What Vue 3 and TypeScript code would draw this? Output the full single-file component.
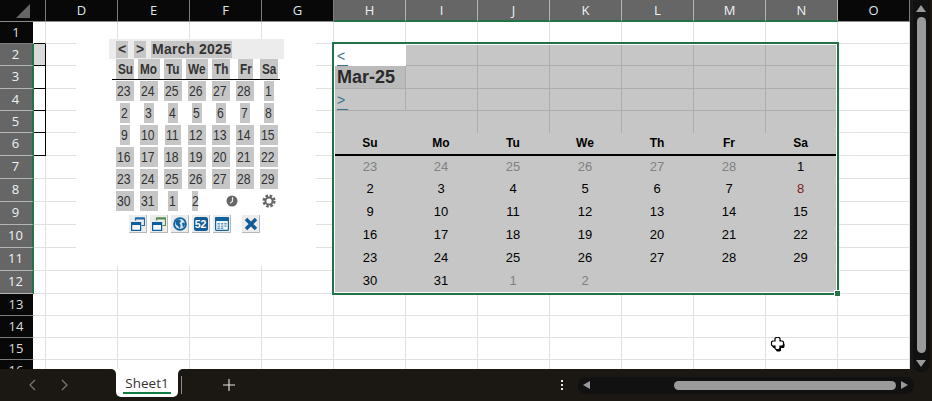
<script setup lang="ts">
const columns = ['', 'D', 'E', 'F', 'G', 'H', 'I', 'J', 'K', 'L', 'M', 'N', 'O']
const rows = Array.from({ length: 16 }, (_, i) => i + 1)
const selectedCol = (c: string) => 'HIJKLMN'.includes(c) && c !== ''
const selectedRow = (r: number) => r >= 2 && r <= 12
const weekdays = ['Su', 'Mo', 'Tu', 'We', 'Th', 'Fr', 'Sa']
const miniDates = [23, 24, 25, 26, 27, 28, 1, 2, 3, 4, 5, 6, 7, 8, 9, 10, 11, 12, 13, 14, 15, 16, 17, 18, 19, 20, 21, 22, 23, 24, 25, 26, 27, 28, 29, 30, 31, 1]
interface Day { n: number; muted?: boolean; red?: boolean }
const bigDates: Day[] = [
  { n: 23, muted: true }, { n: 24, muted: true }, { n: 25, muted: true }, { n: 26, muted: true }, { n: 27, muted: true }, { n: 28, muted: true }, { n: 1 },
  { n: 2 }, { n: 3 }, { n: 4 }, { n: 5 }, { n: 6 }, { n: 7 }, { n: 8, red: true },
  ...[9, 10, 11, 12, 13, 14, 15, 16, 17, 18, 19, 20, 21, 22, 23, 24, 25, 26, 27, 28, 29, 30, 31].map((n) => ({ n })),
  { n: 1, muted: true }, { n: 2, muted: true }
]
const topCells = Array.from({ length: 28 }, (_, i) => i)
</script>

<template>
  <div class="app">
    <div class="main">
      <div class="sheet-wrap">
        <div class="sheet">
          <div class="corner"><span class="tri"></span></div>
          <div v-for="c in columns" :key="'h' + c" class="col-head" :class="{ sel: selectedCol(c) }">{{ c }}</div>
          <template v-for="r in rows" :key="r">
            <div class="row-head" :class="{ sel: selectedRow(r) }">{{ r }}</div>
            <div
              v-for="(c, ci) in columns"
              :key="r + c"
              class="cell"
              :class="{ boxed: ci === 0 && r >= 1 && r <= 6, boxedrow: ci === 0 && r === 1, shade: ci === 0 && r === 2 }"
            ></div>
          </template>
        </div>

        <!-- floating calendar picture -->
        <div class="picture">
          <div class="band">
            <span class="nav">&lt;</span>
            <span class="nav">&gt;</span>
            <span class="title">March 2025</span>
          </div>
          <div class="mini-grid heads">
            <div v-for="w in weekdays" :key="w" class="mini-cell"><b class="chip head-chip"><span class="sq sq-head">{{ w }}</span></b></div>
          </div>
          <div class="mini-rule"></div>
          <div class="mini-grid dates">
            <div v-for="(d, i) in miniDates" :key="i" class="mini-cell"><span class="chip"><span class="sq">{{ d }}</span></span></div>
            <div class="mini-cell"><span class="chip narrow"><span class="sq">2</span></span></div>
            <div class="mini-cell clock-cell">
              <svg width="12" height="12" viewBox="0 0 12 12">
                <circle cx="6" cy="6" r="5.5" fill="#666" />
                <path d="M6.6 2.2 L6.4 6.4 L4 8.4" stroke="#eee" stroke-width="1.2" fill="none" />
              </svg>
            </div>
            <div class="mini-cell gear-cell">
              <svg width="14" height="14" viewBox="0 0 14 14">
                <circle cx="7" cy="7" r="5.4" fill="none" stroke="#666" stroke-width="2.4" stroke-dasharray="2.6 1.64" />
                <circle cx="7" cy="7" r="3.6" fill="none" stroke="#666" stroke-width="2" />
              </svg>
            </div>
          </div>
          <div class="tools">
            <button class="tool" type="button">
              <svg width="14" height="14" viewBox="0 0 14 14" fill="none">
                <path d="M4.5 3.5V1h9v7.5h-3" stroke="#1a6ca8" stroke-width="1.2" />
                <path d="M4.5 1.5h9" stroke="#1a6ca8" stroke-width="2" />
                <rect x=".6" y="5.6" width="9" height="7.8" stroke="#0b5f9e" stroke-width="1.2" fill="#f6f6f6" />
                <rect x="0" y="5" width="10" height="3" fill="#0b5f9e" />
              </svg>
            </button>
            <button class="tool" type="button">
              <svg width="14" height="14" viewBox="0 0 14 14" fill="none">
                <path d="M4.5 3.5V1h9v7.5h-3" stroke="#5b8a52" stroke-width="1.2" />
                <path d="M4.5 1.5h9" stroke="#5b8a52" stroke-width="2" />
                <rect x=".6" y="5.6" width="9" height="7.8" stroke="#0b5f9e" stroke-width="1.2" fill="#f6f6f6" />
                <rect x="0" y="5" width="10" height="3" fill="#0b5f9e" />
              </svg>
            </button>
            <button class="tool" type="button">
              <svg width="14" height="14" viewBox="0 0 14 14">
                <circle cx="7" cy="7" r="6.8" fill="#0f639f" />
                <circle cx="7" cy="7" r="5" fill="#d8e6f0" />
                <path d="M4 2.6 7 2.4 8 4.4 6.4 6 7.6 8 7 12 5.4 9.4 3 7.4 2.4 5Z M9 6l2.6-.6.4 2.4-2 2.6Z" fill="#0f639f" />
              </svg>
            </button>
            <button class="tool" type="button"><span class="wk">52</span></button>
            <button class="tool" type="button">
              <svg width="14" height="14" viewBox="0 0 14 14" fill="none">
                <rect x=".6" y=".6" width="12.8" height="12.8" rx="1" fill="#f4f8fb" stroke="#0f639f" stroke-width="1.2" />
                <rect x="0" y="0" width="14" height="4" rx="1" fill="#0f639f" />
                <path d="M2.5 6h2.4v1.4H2.5zM5.9 6h2.4v1.4H5.9zM9.3 6h2.4v1.4H9.3zM2.5 8.4h2.4v1.4H2.5zM5.9 8.4h2.4v1.4H5.9zM9.3 8.4h2.4v1.4H9.3zM2.5 10.6h2.4V12H2.5zM5.9 10.6h2.4V12H5.9z" fill="#5e97c0" />
              </svg>
            </button>
            <button class="tool close" type="button">
              <svg width="14" height="14" viewBox="0 0 14 14">
                <path d="M2 2 12 12M12 2 2 12" stroke="#0f5c98" stroke-width="3.4" />
              </svg>
            </button>
          </div>
        </div>

        <!-- selected range -->
        <div class="selection">
          <div class="top-grid">
            <div v-for="i in topCells" :key="i" class="top-cell" :class="{ active: i === 0, month: i === 7, last: (i + 1) % 7 === 0, bottom: i >= 21 }">
              <span v-if="i === 0" class="link">&lt;</span>
              <span v-else-if="i === 7">Mar-25</span>
              <span v-else-if="i === 14" class="link">&gt;</span>
            </div>
          </div>
          <div class="big-heads">
            <div v-for="w in weekdays" :key="w">{{ w }}</div>
          </div>
          <div class="big-dates">
            <div v-for="(d, i) in bigDates" :key="i" :class="{ muted: d.muted, red: d.red }">{{ d.n }}</div>
          </div>
          <span class="handle"></span>
        </div>

        <svg class="cursor" width="17" height="17" viewBox="0 0 17 17">
          <path d="M6 2.5h3l1 1v2.5h2.500l1 1v3l-1 1H10v2.500l-1 1H6l-1-1V11H2.500l-1-1V7l1-1H5V3.500Z" fill="#000" transform="translate(1 1)" />
          <path d="M6 1.500h3l1 1V5h2.500l1 1v3l-1 1H10v2.500l-1 1H6l-1-1V10H2.500l-1-1V6l1-1H5V2.500Z" fill="#fff" stroke="#000" stroke-width="1.200" />
        </svg>
      </div>

      <div class="vscroll">
        <div class="vtrack">
          <span class="arrow-up"></span>
          <span class="vthumb"></span>
          <span class="arrow-down"></span>
        </div>
      </div>
    </div>

    <div class="tabbar">
      <div class="seg-left">
        <svg width="8" height="12" viewBox="0 0 8 12" fill="none"><path d="M7 1 2 6l5 5" stroke="#7a7a7a" stroke-width="1.200" /></svg>
        <svg width="8" height="12" viewBox="0 0 8 12" fill="none"><path d="M1 1l5 5-5 5" stroke="#7a7a7a" stroke-width="1.200" /></svg>
      </div>
      <div class="tab-wrap"><div class="tab"><span class="tab-text">Sheet1</span></div></div>
      <div class="seg-right">
        <span class="sep"></span>
        <svg class="plus" width="12" height="12" viewBox="0 0 12 12"><path d="M6 0v12M0 6h12" stroke="#e8e8e8" stroke-width="1.100" /></svg>
        <span class="dots"><i></i><i></i><i></i></span>
        <div class="htrack">
          <span class="arrow-left"></span>
          <span class="hthumb"></span>
          <span class="arrow-right"></span>
        </div>
      </div>
    </div>
  </div>
</template>

<style>
html, body { margin: 0; background: #fff; }
</style>

<style scoped>
.app {
  width: 932px;
  height: 401px;
  overflow: hidden;
  display: flex;
  flex-direction: column;
  font-family: "Liberation Sans", Arial, sans-serif;
  background: #fff;
}
.main { display: flex; height: 369px; }
.sheet-wrap { position: relative; width: 910px; height: 369px; overflow: hidden; }
.sheet {
  display: grid;
  grid-template-columns: 34px 12px repeat(12, 72px);
  grid-template-rows: 22px 22px 22px 23px 22px 22px 23px 23px 23px 23px 23px 23px 23px 22px 22px 22px 22px;
}
.corner {
  background: #080808;
  border-bottom: 1px solid #8c8c8c;
  position: relative;
}
.tri {
  position: absolute;
  left: 16px;
  top: 4px;
  width: 0;
  height: 0;
  border-left: 14px solid transparent;
  border-bottom: 14px solid #666;
}
.col-head {
  background: #080808;
  color: #dfe6ea;
  font: 13px/21px "Open Sans", sans-serif;
  text-align: center;
  border-right: 1px solid #7c7c7c;
  border-bottom: 1px solid #8c8c8c;
}
.col-head.sel {
  background: #666;
  color: #eef2f5;
  border-right-color: #b4b4b4;
  border-bottom: 2px solid #217346;
  line-height: 20px;
}
.row-head {
  background: #080808;
  color: #dcdcdc;
  font: 13px/21px "Open Sans", sans-serif;
  text-align: center;
  padding-right: 1px;
  box-sizing: border-box;
  border-right: 1px solid #fff;
  border-bottom: 1px solid #7c7c7c;
}
.row-head.sel {
  background: #666;
  color: #eef2f5;
  border-bottom-color: #b4b4b4;
  border-right: 2px solid #217346;
}
.cell {
  background: #fff;
  border-right: 1px solid #e0e0e0;
  border-bottom: 1px solid #e0e0e0;
}
.cell.boxed { border-right-color: #000; border-bottom-color: #000; }
.cell.boxedrow { border-right-color: #e0e0e0; }
.cell.shade { background: #d9d9d9; }

.picture {
  position: absolute;
  left: 76px;
  top: 39px;
  width: 240px;
  height: 227px;
  background: #fff;
  padding-left: 33px;
  box-sizing: border-box;
  color: #333;
}
.band {
  width: 175px;
  height: 20px;
  background: #ececec;
  display: flex;
  align-items: center;
  padding: 1px 0 0 7px;
  box-sizing: border-box;
  font: bold 14px/17px "Liberation Sans", Arial, sans-serif;
  gap: 6px;
}
.nav { background: #c6c6c6; width: 12px; text-align: center; }
.title { background: #c6c6c6; margin-left: -1px; padding: 0 1px; letter-spacing: 0.3px; }
.mini-grid {
  display: grid;
  grid-template-columns: repeat(7, 24px);
  margin-left: 4px;
}
.heads { height: 20px; }
.mini-cell { display: flex; justify-content: center; }
.chip {
  display: block;
  background: #c6c6c6;
  padding: 0 1px;
  font-size: 14px;
  line-height: 20px;
  height: 20px;
  white-space: nowrap;
}
.head-chip { padding: 0 .5px; }
.sq { display: inline-block; transform: scaleX(.87); transform-origin: 0 50%; }
.sq-head { transform: scaleX(.84); margin-left: 1.5px; margin-right: -1.5px; }
.chip.narrow { width: 6px; padding: 0; margin-right: 4px; text-align: left; }
.mini-rule { width: 168px; height: 1px; background: #000; margin-left: 3px; }
.dates { margin-top: 1px; grid-auto-rows: 22px; }
.clock-cell { grid-column: 5 / span 2; align-items: center; height: 20px; padding-right: 3px; }
.gear-cell { align-items: center; height: 20px; padding-right: 1px; }
.tools { display: flex; gap: 3px; margin: 2px 0 0 20px; }
.tool {
  width: 18px;
  height: 18px;
  padding: 0;
  border: none;
  border-right: 1px solid #b8b8b8;
  border-bottom: 1px solid #b8b8b8;
  background: #ececec;
  display: flex;
  align-items: center;
  justify-content: center;
  box-sizing: border-box;
}
.close { margin-left: 8px; }
.wk {
  display: block;
  width: 14px;
  height: 14px;
  background: #0f5c98;
  border-radius: 2.5px;
  color: #fff;
  font: bold 10.5px/14px "Liberation Sans", Arial, sans-serif;
  text-align: center;
}

.selection {
  position: absolute;
  left: 332px;
  top: 42px;
  width: 507px;
  height: 253px;
  box-sizing: border-box;
  border: 2px solid #217346;
  padding: 1px;
  background: #fff;
}
.top-grid {
  display: grid;
  grid-template-columns: 71px repeat(5, 72px) 70px;
  grid-template-rows: 21px 23px 22px 22px;
  background: #c6c6c6;
}
.top-cell {
  box-sizing: border-box;
  background: #c6c6c6;
  border-right: 1px solid #adadad;
  border-bottom: 1px solid #adadad;
  display: flex;
  align-items: center;
  padding-left: 2px;
}
.top-cell.last { border-right: none; }
.top-cell.bottom { border-bottom: none; }
.top-cell:nth-child(22) { border-right: none; }
.top-cell.active { background: #fff; border: none; margin-right: 0; border-right: 1px solid #fff; }
.top-cell.month {
  background: #bbb;
  color: #2a2a2a;
  font-weight: bold;
  font-size: 18px;
}
.link {
  color: #3d6f8a;
  text-decoration: underline;
  text-underline-offset: 4px;
  text-decoration-thickness: 1px;
  font-size: 14px;
  line-height: 20px;
  letter-spacing: 3px;
}
.big-heads,
.big-dates {
  display: grid;
  grid-template-columns: 70px repeat(5, 72px) 71px;
  background: #c6c6c6;
  text-align: center;
  color: #000;
}
.big-heads {
  height: 23px;
  box-sizing: border-box;
  border-bottom: 2px solid #000;
  font: bold 12px/21px "Liberation Sans", Arial, sans-serif;
}
.big-dates {
  grid-template-rows: 22px 23px 23px 23px 23px 22px;
  font-size: 13px;
  line-height: 22px;
  height: 136px;
}
.muted { color: #808080; }
.red { color: #7c1c1c; }
.handle {
  position: absolute;
  right: -3px;
  bottom: -3px;
  width: 5px;
  height: 5px;
  background: #217346;
  outline: 1px solid #fff;
}
.cursor { position: absolute; left: 770px; top: 336px; }

.vscroll { width: 22px; background: #1b1713; position: relative; }
.vtrack {
  position: absolute;
  left: 3px;
  top: 0;
  width: 17px;
  height: 372px;
  background: #111;
  border-radius: 0 0 8px 8px;
  z-index: 2;
}
.vthumb {
  position: absolute;
  left: 4px;
  top: 17px;
  width: 9px;
  height: 336px;
  background: #9a9a9a;
  border-radius: 5px;
}
.arrow-up, .arrow-down {
  position: absolute;
  left: 3px;
  width: 0;
  height: 0;
  border-left: 5.5px solid transparent;
  border-right: 5.5px solid transparent;
}
.arrow-up { top: 5px; border-bottom: 7px solid #9a9a9a; }
.arrow-down { top: 360px; border-top: 7px solid #9a9a9a; }

.tabbar { display: flex; height: 32px; background: #fff; }
.seg-left {
  width: 116px;
  background: #1b1713;
  border-top-right-radius: 5px;
  display: flex;
  align-items: center;
  box-sizing: border-box;
  padding-left: 28px;
  gap: 25px;
}
.tab-wrap { width: 62px; background: #1b1713; }
.tab {
  height: 28px;
  background: #fff;
  border-radius: 0 0 5px 5px;
  position: relative;
  display: flex;
  justify-content: center;
}
.tab-text {
  font: 13.5px/24px "Open Sans", sans-serif;
  color: #333;
  border-bottom: 2px solid #107c41;
  height: 21px;
  padding: 0 2px;
  margin-top: 2px;
}
.seg-right {
  flex: 1;
  background: #1b1713;
  border-top-left-radius: 5px;
  display: flex;
  align-items: center;
  position: relative;
}
.sep { width: 1px; height: 18px; background: #8a8a8a; margin-left: 3px; }
.plus { margin-left: 41px; }
.dots {
  display: flex;
  flex-direction: column;
  gap: 2px;
  margin-left: 326px;
}
.dots i { display: block; width: 2px; height: 2px; background: #e6e6e6; }
.htrack {
  position: relative;
  width: 336px;
  height: 17px;
  background: #111;
  border-radius: 8px;
  margin-left: 15px;
}
.hthumb {
  position: absolute;
  left: 96px;
  top: 4px;
  width: 222px;
  height: 9px;
  background: #9a9a9a;
  border-radius: 5px;
}
.arrow-left, .arrow-right {
  position: absolute;
  top: 4px;
  width: 0;
  height: 0;
  border-top: 4.500px solid transparent;
  border-bottom: 4.500px solid transparent;
}
.arrow-left { left: 5px; border-right: 7px solid #9a9a9a; }
.arrow-right { left: 323px; border-left: 7px solid #9a9a9a; }
</style>
